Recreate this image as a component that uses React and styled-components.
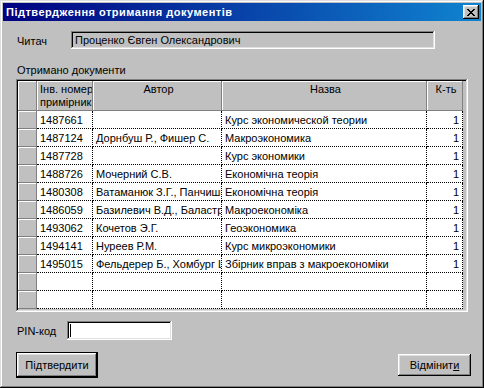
import React from "react"
import styled, { createGlobalStyle } from "styled-components"

const rows = [
  ["1487661", "", "Курс экономической теории", "1"],
  ["1487124", "Дорнбуш Р., Фишер С.", "Макроэкономика", "1"],
  ["1487728", "", "Курс экономики", "1"],
  ["1488726", "Мочерний С.В.", "Економічна теорія", "1"],
  ["1480308", "Ватаманюк З.Г., Панчишин С.М.", "Економічна теорія", "1"],
  ["1486059", "Базилевич В.Д., Баластрик Л.О.", "Макроекономіка", "1"],
  ["1493062", "Кочетов Э.Г.", "Геоэкономика", "1"],
  ["1494141", "Нуреев Р.М.", "Курс микроэкономики", "1"],
  ["1495015", "Фельдерер Б., Хомбург Ш.", "Збірник вправ з макроекономіки", "1"],
  ["", "", "", ""],
  ["", "", "", ""],
]

const cross = [
  "XX....XX",
  ".XX..XX.",
  "..XXXX..",
  "...XX...",
  "..XXXX..",
  ".XX..XX.",
  "XX....XX",
]

function App() {
  return (
    <>
      <Global />
      <Window>
        <TitleBar>
          <Caption>Підтвердження отримання документів</Caption>
          <CloseButton>
            <svg width="8" height="7" shapeRendering="crispEdges">
              {cross.map((line, y) =>
                line.split("").map((c, x) =>
                  c === "X" ? <rect key={`${x}-${y}`} x={x} y={y} width="1" height="1" fill="#000" /> : null
                )
              )}
            </svg>
          </CloseButton>
        </TitleBar>

        <Body>
          <FieldRow>
            <Label width={55}>Читач</Label>
            <Field width={364} height={18} readOnly>Проценко Євген Олександрович</Field>
          </FieldRow>

          <GroupLabel>Отримано документи</GroupLabel>

          <Grid>
            <Table>
              <Head />
              <Head align="left">Інв. номер<br />примірника</Head>
              <Head>Автор</Head>
              <Head>Назва</Head>
              <Head>К-ть</Head>
              {rows.map((r, i) => (
                <React.Fragment key={i}>
                  <Indicator />
                  <Cell>{r[0]}</Cell>
                  <Cell>{r[1]}</Cell>
                  <Cell>{r[2]}</Cell>
                  <Cell align="right">{r[3]}</Cell>
                </React.Fragment>
              ))}
            </Table>
          </Grid>

          <PinRow>
            <Label width={51}>PIN-код</Label>
            <Field width={105} height={19}>
              <Caret />
            </Field>
          </PinRow>

          <Buttons>
            <Button primary>Підтвердити</Button>
            <Button>Відмінит<u>и</u></Button>
          </Buttons>
        </Body>
      </Window>
    </>
  )
}

const Global = createGlobalStyle`
  body {
    margin: 0;
    font-family: "Liberation Sans", Arial, sans-serif;
    font-size: 11px;
    color: #000;
  }
`

const bevel = `
  box-shadow: inset -1px -1px #000, inset 1px 1px #fff,
    inset -2px -2px #808080, inset 2px 2px #dfdfdf;
`

const sunken = `
  box-shadow: inset -1px -1px #fff, inset 1px 1px #808080,
    inset -2px -2px #dfdfdf, inset 2px 2px #000;
`

const Window = styled.div`
  width: 484px;
  height: 388px;
  box-sizing: border-box;
  padding: 3px;
  background: #c0c0c0;
  box-shadow: inset -1px -1px #000, inset 1px 1px #dfdfdf,
    inset -2px -2px #808080, inset 2px 2px #fff;
  display: flex;
  flex-direction: column;
  overflow: hidden;
`

const TitleBar = styled.div`
  height: 18px;
  flex-shrink: 0;
  display: flex;
  align-items: center;
  justify-content: space-between;
  padding: 0 2px 0 3px;
  background: linear-gradient(90deg, #000080, #1084d0);
`

const Caption = styled.span`
  color: #fff;
  font-weight: bold;
  font-size: 11px;
  letter-spacing: 0.5px;
`

const CloseButton = styled.div`
  width: 16px;
  height: 14px;
  background: #c0c0c0;
  display: flex;
  align-items: center;
  justify-content: center;
  ${bevel}
`

const Body = styled.div`
  display: flex;
  flex-direction: column;
  padding: 10px 10px 0 13px;
`

const FieldRow = styled.div`
  display: flex;
  align-items: center;
`

const Label = styled.span`
  width: ${p => p.width}px;
  padding: 1px 0 0 1px;
  box-sizing: border-box;
`

const Field = styled.div`
  width: ${p => p.width}px;
  height: ${p => p.height}px;
  box-sizing: border-box;
  padding: 0 4px;
  display: flex;
  align-items: center;
  background: ${p => (p.readOnly ? "#c0c0c0" : "#fff")};
  ${sunken}
  white-space: nowrap;
`

const Caret = styled.span`
  width: 1px;
  height: 13px;
  margin-left: -1px;
  background: #000;
`

const GroupLabel = styled.div`
  margin: 15px 0 2px 1px;
  line-height: 13px;
`

const Grid = styled.div`
  width: 452px;
  height: 233px;
  box-sizing: border-box;
  padding: 2px;
  background: #c0c0c0;
  ${sunken}
  overflow: hidden;
`

const Table = styled.div`
  display: grid;
  grid-template-columns: 19px 56px 129px 205px 36px;
  grid-template-rows: 30px;
  grid-auto-rows: 18px;
`

const Head = styled.div`
  box-sizing: border-box;
  background: #c0c0c0;
  border-right: 1px solid #808080;
  border-bottom: 1px solid #808080;
  box-shadow: inset 1px 1px #fff;
  padding: 2px 0 0 3px;
  line-height: 13px;
  text-align: ${p => p.align || "center"};
  white-space: nowrap;
  overflow: hidden;
`

const Indicator = styled.div`
  box-sizing: border-box;
  background: #c0c0c0;
  border-right: 1px solid #808080;
  border-bottom: 1px solid #808080;
  box-shadow: inset 1px 1px #fff;
`

const Cell = styled.div`
  box-sizing: border-box;
  background: #fff;
  border-right: 1px dotted #000;
  border-bottom: 1px dotted #000;
  padding: 2px 3px 0 3px;
  line-height: 15px;
  text-align: ${p => p.align || "left"};
  white-space: nowrap;
  overflow: hidden;
`

const PinRow = styled(FieldRow)`
  margin-top: 9px;
`

const Buttons = styled.div`
  display: flex;
  align-items: center;
  justify-content: space-between;
  height: 26px;
  margin-top: 12px;
`

const Button = styled.div`
  box-sizing: border-box;
  width: ${p => (p.primary ? 82 : 73)}px;
  height: ${p => (p.primary ? 26 : 22)}px;
  display: flex;
  align-items: center;
  justify-content: center;
  background: #c0c0c0;
  border: ${p => (p.primary ? "1px solid #000" : "none")};
  ${bevel}

  u {
    text-decoration-thickness: 1px;
  }
`

export default App
